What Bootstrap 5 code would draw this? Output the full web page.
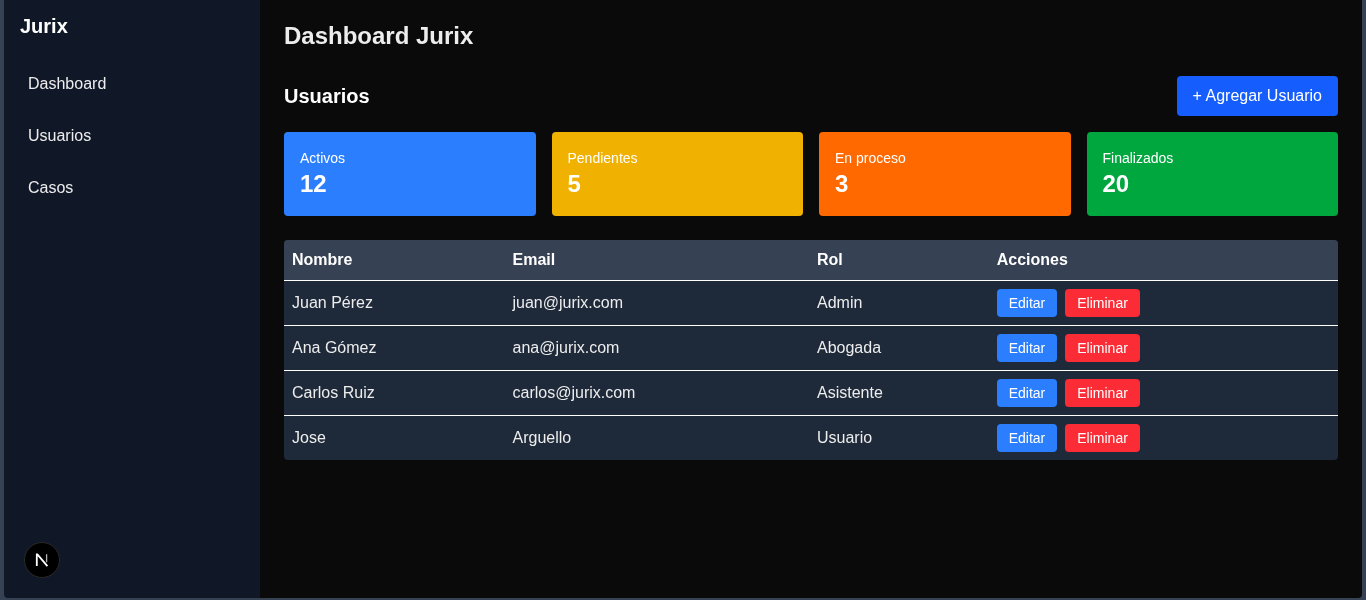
<!DOCTYPE html>
<html lang="es">
<head>
<meta charset="utf-8">
<title>Dashboard Jurix</title>
<link href="https://cdn.jsdelivr.net/npm/bootstrap@5.3.0/dist/css/bootstrap.min.css" rel="stylesheet">
<style>
html, body { height: 100%; }
body { background: #364153; font-family: "Liberation Sans", Arial, sans-serif; color: #ededed; overflow: hidden; }
.shell { height: 600px; padding: 0 4px 2px 4px; will-change: transform; }
.side { width: 256px; background: #101828; padding: 16px; border-bottom-left-radius: 4px; }
.side-title { font-size: 20px; line-height: 20px; font-weight: 700; color: #fff; margin: 0 0 28px 0; }
.side-link { display: block; color: #ededed; text-decoration: none; font-size: 16px; line-height: 24px; padding: 8px; margin-bottom: 12px; border-radius: 4px; }
.next-badge { width: 36px; height: 36px; border-radius: 50%; background: #000; border: 1px solid #2a2a2a; margin: auto 0 4px 4px; }
.main-area { background: #0a0a0a; padding: 20px 24px 0 24px; border-bottom-right-radius: 4px; }
.page-title { font-size: 24px; line-height: 32px; font-weight: 700; color: #ededed; margin: 0 0 24px 0; }
.sect-title { font-size: 20px; line-height: 28px; font-weight: 700; color: #fff; margin: 0; }
.add-btn { background: #155dfc; border: 0; color: #fff; font-size: 16px; line-height: 24px; padding: 8px 16px; border-radius: 4px; }
.stat { flex: 1 1 0; height: 84px; padding: 16px; border-radius: 4px; color: #fff; }
.stat-label { font-size: 14px; line-height: 20px; }
.stat-value { font-size: 24px; line-height: 32px; font-weight: 700; }
.bg-a { background: #2b7fff; } .bg-p { background: #f0b100; } .bg-o { background: #ff6900; } .bg-f { background: #00a63e; }
.tbl-wrap { border-radius: 4px; overflow: hidden; }
.user-table { width: 100%; border-collapse: separate; border-spacing: 0; background: #1e2939; color: #ededed; font-size: 16px; table-layout: fixed; }
.user-table th { background: #364153; color: #fff; height: 41px; padding: 8px; line-height: 24px; font-weight: 700; border-bottom: 1px solid #fff; }
.user-table td { height: 45px; padding: 8px; line-height: 24px; vertical-align: middle; border-bottom: 1px solid #fff; }
.user-table tr:last-child td { border-bottom: 0; height: 44px; }
.c1 { width: 220.5px; } .c2 { width: 304.5px; } .c3 { width: 179.7px; }
.act { border: 0; color: #fff; font-size: 14px; line-height: 20px; padding: 4px 12px; border-radius: 4px; }
.act-e { background: #2b7fff; } .act-d { background: #fb2c36; }
</style>
</head>
<body>
<div class="shell d-flex">
  <aside class="side d-flex flex-column flex-shrink-0">
    <h2 class="side-title">Jurix</h2>
    <nav>
      <a class="side-link" href="#">Dashboard</a>
      <a class="side-link" href="#">Usuarios</a>
      <a class="side-link" href="#">Casos</a>
    </nav>
    <div class="next-badge d-flex align-items-center justify-content-center">
      <svg width="14" height="14" viewBox="0 0 14 14" fill="none">
        <path d="M1.8 13V1.4H2.4L12.4 13.2" stroke="#fff" stroke-width="1.8"/>
        <path d="M11.6 1.2v8" stroke="#fff" stroke-width="1.3" opacity=".7"/>
      </svg>
    </div>
  </aside>
  <main class="main-area flex-grow-1">
    <h1 class="page-title">Dashboard Jurix</h1>
    <div class="d-flex justify-content-between align-items-center mb-3">
      <h2 class="sect-title">Usuarios</h2>
      <button class="add-btn" type="button">+ Agregar Usuario</button>
    </div>
    <div class="d-flex gap-3 mb-4">
      <div class="stat bg-a"><div class="stat-label">Activos</div><div class="stat-value">12</div></div>
      <div class="stat bg-p"><div class="stat-label">Pendientes</div><div class="stat-value">5</div></div>
      <div class="stat bg-o"><div class="stat-label">En proceso</div><div class="stat-value">3</div></div>
      <div class="stat bg-f"><div class="stat-label">Finalizados</div><div class="stat-value">20</div></div>
    </div>
    <div class="tbl-wrap">
      <table class="user-table">
        <thead><tr><th class="c1">Nombre</th><th class="c2">Email</th><th class="c3">Rol</th><th>Acciones</th></tr></thead>
        <tbody>
          <tr><td>Juan Pérez</td><td>juan@jurix.com</td><td>Admin</td><td><div class="d-flex gap-2"><button class="act act-e" type="button">Editar</button><button class="act act-d" type="button">Eliminar</button></div></td></tr>
          <tr><td>Ana Gómez</td><td>ana@jurix.com</td><td>Abogada</td><td><div class="d-flex gap-2"><button class="act act-e" type="button">Editar</button><button class="act act-d" type="button">Eliminar</button></div></td></tr>
          <tr><td>Carlos Ruiz</td><td>carlos@jurix.com</td><td>Asistente</td><td><div class="d-flex gap-2"><button class="act act-e" type="button">Editar</button><button class="act act-d" type="button">Eliminar</button></div></td></tr>
          <tr><td>Jose</td><td>Arguello</td><td>Usuario</td><td><div class="d-flex gap-2"><button class="act act-e" type="button">Editar</button><button class="act act-d" type="button">Eliminar</button></div></td></tr>
        </tbody>
      </table>
    </div>
  </main>
</div>
<script src="https://cdn.jsdelivr.net/npm/bootstrap@5.3.0/dist/js/bootstrap.bundle.min.js"></script>
</body>
</html>
